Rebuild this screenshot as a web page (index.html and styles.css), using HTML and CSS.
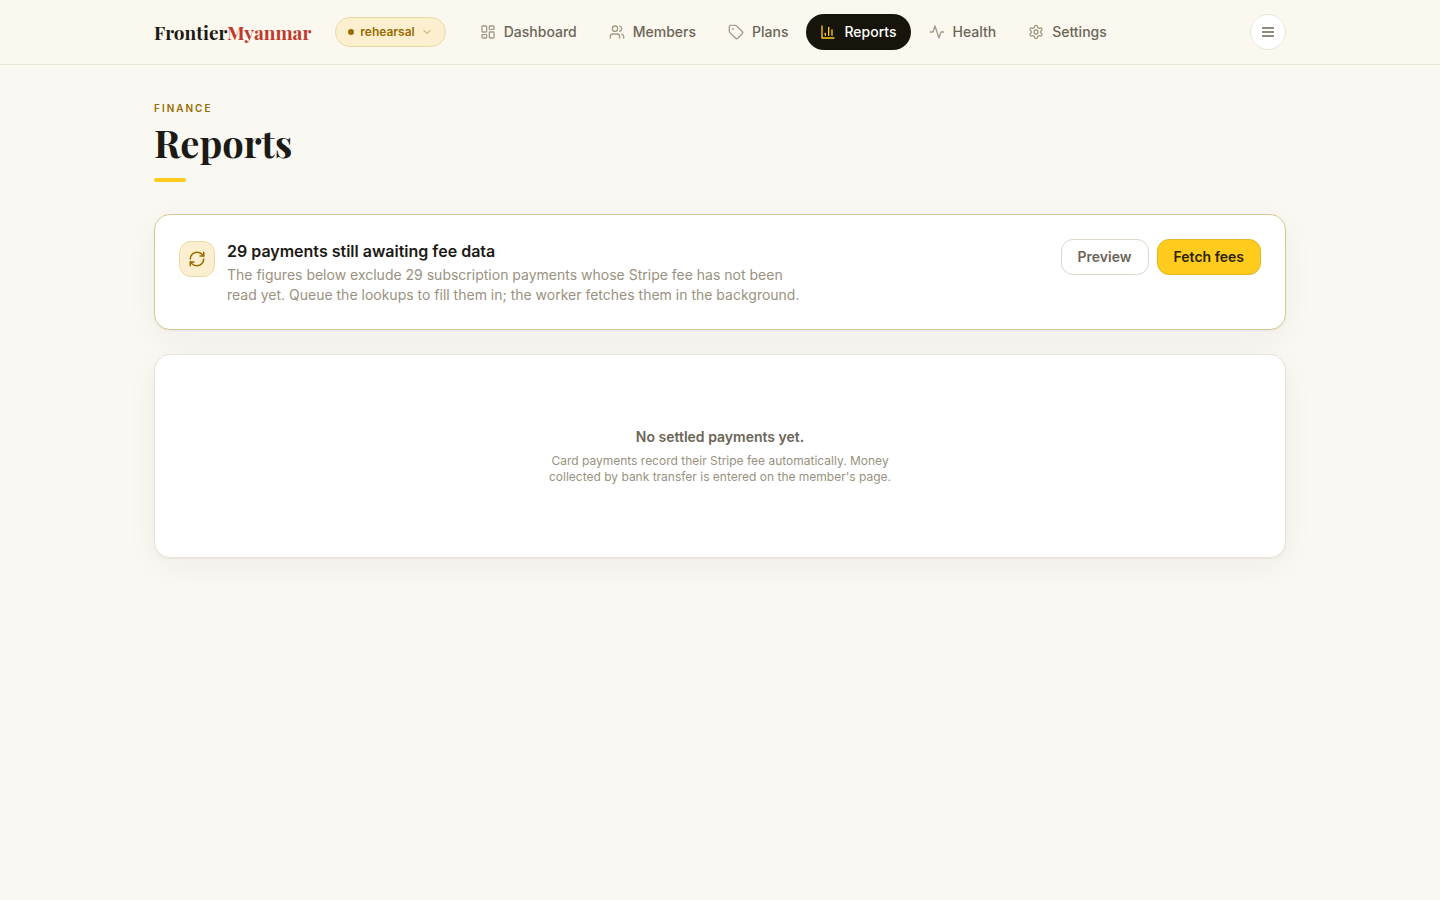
FILE: index.html
```html
<!DOCTYPE html>
<html lang="en">
<head>
  <meta charset="UTF-8" />
  <meta name="viewport" content="width=device-width, initial-scale=1" />
  <title>Reports – Frontier Myanmar</title>
  <link rel="stylesheet" href="styles.css">
</head>
<body>

  <header class="topbar">
    <div class="container topbar-inner">
      <a class="logo" href="#">Frontier<span>Myanmar</span></a>

      <button class="env" type="button">
        <span class="dot"></span>
        rehearsal
        <svg class="icon chevron" viewBox="0 0 24 24"><path d="m6 9 6 6 6-6"/></svg>
      </button>

      <nav class="nav">
        <a href="#">
          <svg class="icon" viewBox="0 0 24 24"><rect width="7" height="9" x="3" y="3" rx="1"/><rect width="7" height="5" x="14" y="3" rx="1"/><rect width="7" height="9" x="14" y="12" rx="1"/><rect width="7" height="5" x="3" y="16" rx="1"/></svg>
          Dashboard
        </a>
        <a href="#">
          <svg class="icon" viewBox="0 0 24 24"><path d="M16 21v-2a4 4 0 0 0-4-4H6a4 4 0 0 0-4 4v2"/><circle cx="9" cy="7" r="4"/><path d="M22 21v-2a4 4 0 0 0-3-3.87"/><path d="M16 3.13a4 4 0 0 1 0 7.75"/></svg>
          Members
        </a>
        <a href="#">
          <svg class="icon" viewBox="0 0 24 24"><path d="M12.586 2.586A2 2 0 0 0 11.172 2H4a2 2 0 0 0-2 2v7.172a2 2 0 0 0 .586 1.414l8.704 8.704a2.426 2.426 0 0 0 3.42 0l6.58-6.58a2.426 2.426 0 0 0 0-3.42z"/><circle class="fill" cx="7.5" cy="7.5" r=".5"/></svg>
          Plans
        </a>
        <a class="active" href="#" aria-current="page">
          <svg class="icon" viewBox="0 0 24 24"><path d="M3 3v18h18"/><path d="M8 17v-3"/><path d="M13 17V5"/><path d="M18 17V9"/></svg>
          Reports
        </a>
        <a href="#">
          <svg class="icon" viewBox="0 0 24 24"><path d="M22 12h-4l-3 9L9 3l-3 9H2"/></svg>
          Health
        </a>
        <a href="#">
          <svg class="icon" viewBox="0 0 24 24"><path d="M12.22 2h-.44a2 2 0 0 0-2 2v.18a2 2 0 0 1-1 1.73l-.43.25a2 2 0 0 1-2 0l-.15-.08a2 2 0 0 0-2.73.73l-.22.38a2 2 0 0 0 .73 2.73l.15.1a2 2 0 0 1 1 1.72v.51a2 2 0 0 1-1 1.74l-.15.09a2 2 0 0 0-.73 2.73l.22.38a2 2 0 0 0 2.73.73l.15-.08a2 2 0 0 1 2 0l.43.25a2 2 0 0 1 1 1.73V20a2 2 0 0 0 2 2h.44a2 2 0 0 0 2-2v-.18a2 2 0 0 1 1-1.73l.43-.25a2 2 0 0 1 2 0l.15.08a2 2 0 0 0 2.73-.73l.22-.39a2 2 0 0 0-.73-2.73l-.15-.08a2 2 0 0 1-1-1.74v-.5a2 2 0 0 1 1-1.74l.15-.09a2 2 0 0 0 .73-2.73l-.22-.38a2 2 0 0 0-2.73-.73l-.15.08a2 2 0 0 1-2 0l-.43-.25a2 2 0 0 1-1-1.73V4a2 2 0 0 0-2-2z"/><circle cx="12" cy="12" r="3"/></svg>
          Settings
        </a>
      </nav>

      <button class="menu" type="button" aria-label="Menu">
        <svg class="icon" viewBox="0 0 16 16"><path d="M2 4h12M2 8h12M2 12h12"/></svg>
      </button>
    </div>
  </header>

  <main class="container page">
    <p class="eyebrow">Finance</p>
    <h1>Reports</h1>
    <div class="rule"></div>

    <section class="card notice">
      <div class="notice-icon">
        <svg class="icon" viewBox="0 0 24 24"><path d="M3 12a9 9 0 0 1 9-9 9.75 9.75 0 0 1 6.74 2.74L21 8"/><path d="M21 3v5h-5"/><path d="M21 12a9 9 0 0 1-9 9 9.75 9.75 0 0 1-6.74-2.74L3 16"/><path d="M8 16H3v5"/></svg>
      </div>
      <div class="notice-text">
        <h2>29 payments still awaiting fee data</h2>
        <p>The figures below exclude 29 subscription payments whose Stripe fee has not been read yet. Queue the lookups to fill them in; the worker fetches them in the background.</p>
      </div>
      <div class="actions">
        <button class="btn" type="button">Preview</button>
        <button class="btn btn-primary" type="button">Fetch fees</button>
      </div>
    </section>

    <section class="card empty">
      <h3>No settled payments yet.</h3>
      <p>Card payments record their Stripe fee automatically. Money collected by bank transfer is entered on the member's page.</p>
    </section>
  </main>

</body>
</html>
```

FILE: styles.css
```css
* {
  box-sizing: border-box;
}

body {
  margin: 0;
  background: #f9f8f3;
  color: #1c1a14;
  font-family: Inter, "Liberation Sans", sans-serif;
  font-size: 14px;
  line-height: 20px;
  -webkit-font-smoothing: antialiased;
}

h1, h2, h3, p {
  margin: 0;
}

a {
  text-decoration: none;
}

button {
  font-family: inherit;
  cursor: pointer;
}

.container {
  max-width: 1180px;
  margin: 0 auto;
  padding: 0 24px;
}

.icon {
  width: 16px;
  height: 16px;
  flex: none;
  fill: none;
  stroke: currentColor;
  stroke-width: 2;
  stroke-linecap: round;
  stroke-linejoin: round;
}

.icon .fill {
  fill: currentColor;
}

/* top bar */

.topbar {
  background: #fbf8f0;
  border-bottom: 1px solid #e8e4d6;
}

.topbar-inner {
  display: flex;
  align-items: center;
  height: 64px;
}

.logo {
  margin-right: 24px;
  color: #1c1a14;
  font-family: "Playfair Display", "Liberation Serif", serif;
  font-size: 19px;
  font-weight: 700;
  line-height: 28px;
}

.logo span {
  color: #c0392b;
}

.env {
  display: flex;
  align-items: center;
  gap: 6px;
  height: 30px;
  margin-right: 20px;
  padding: 0 12px;
  background: #fbefd0;
  border: 1px solid #ecd9a3;
  border-radius: 15px;
  color: #9a6b00;
  font-size: 12px;
  font-weight: 600;
  line-height: 16px;
}

.dot {
  width: 6px;
  height: 6px;
  border-radius: 50%;
  background: #9a6b00;
}

.chevron {
  width: 12px;
  height: 12px;
  opacity: 0.7;
}

.nav {
  display: flex;
  gap: 4px;
}

.nav a {
  display: flex;
  align-items: center;
  gap: 8px;
  height: 36px;
  padding: 0 14px;
  border-radius: 18px;
  color: #6b6556;
  font-weight: 500;
}

.nav .icon {
  color: #a39b87;
}

.nav .active {
  background: #17140c;
  color: #fff;
}

.nav .active .icon {
  color: #ffcc1d;
}

.menu {
  display: flex;
  align-items: center;
  justify-content: center;
  width: 36px;
  height: 36px;
  margin-left: auto;
  padding: 0;
  background: #fff;
  border: 1px solid #e8e4d6;
  border-radius: 50%;
  color: #6b6556;
}

.menu .icon {
  stroke-width: 1.5;
  stroke-linecap: butt;
}

/* page */

.page {
  padding-top: 35px;
  padding-bottom: 48px;
}

.eyebrow {
  color: #9a6b00;
  font-size: 10px;
  font-weight: 600;
  line-height: 16px;
  letter-spacing: 2px;
  text-transform: uppercase;
}

h1 {
  margin-top: 4px;
  font-family: "Playfair Display", "Liberation Serif", serif;
  font-size: 38px;
  font-weight: 700;
  line-height: 46px;
}

.rule {
  width: 32px;
  height: 4px;
  margin: 12px 0 32px;
  border-radius: 2px;
  background: #ffcc1d;
}

.card {
  background: #fff;
  border: 1px solid #e8e4d6;
  border-radius: 16px;
  box-shadow: 0 1px 2px rgba(60, 45, 10, 0.05), 0 8px 32px rgba(60, 45, 10, 0.05);
}

.notice {
  display: flex;
  align-items: flex-start;
  gap: 12px;
  margin-bottom: 24px;
  padding: 24px;
  border-color: #d9c595;
}

.notice-icon {
  display: flex;
  align-items: center;
  justify-content: center;
  width: 36px;
  height: 36px;
  margin-top: 2px;
  background: #fbefd0;
  border: 1px solid #ecd9a3;
  border-radius: 12px;
  color: #9a6b00;
}

.notice-icon .icon {
  width: 18px;
  height: 18px;
}

.notice-text {
  max-width: 576px;
}

.notice-text h2 {
  margin-bottom: 2px;
  font-size: 16px;
  font-weight: 600;
  line-height: 24px;
}

.notice-text p {
  color: #999280;
}

.actions {
  display: flex;
  gap: 8px;
  margin-left: auto;
}

.btn {
  height: 36px;
  padding: 0 16px;
  background: #fff;
  border: 1px solid #ddd6c8;
  border-radius: 12px;
  color: #6b6556;
  font-size: 14px;
  font-weight: 600;
  line-height: 20px;
}

.btn-primary {
  background: #ffcc1d;
  border-color: #e3b521;
  color: #2b2200;
}

.empty {
  padding: 72px 24px;
  text-align: center;
}

.empty h3 {
  margin-bottom: 6px;
  color: #6b6556;
  font-size: 14px;
  font-weight: 600;
}

.empty p {
  max-width: 360px;
  margin: 0 auto;
  color: #999280;
  font-size: 12px;
  line-height: 16px;
}
```
